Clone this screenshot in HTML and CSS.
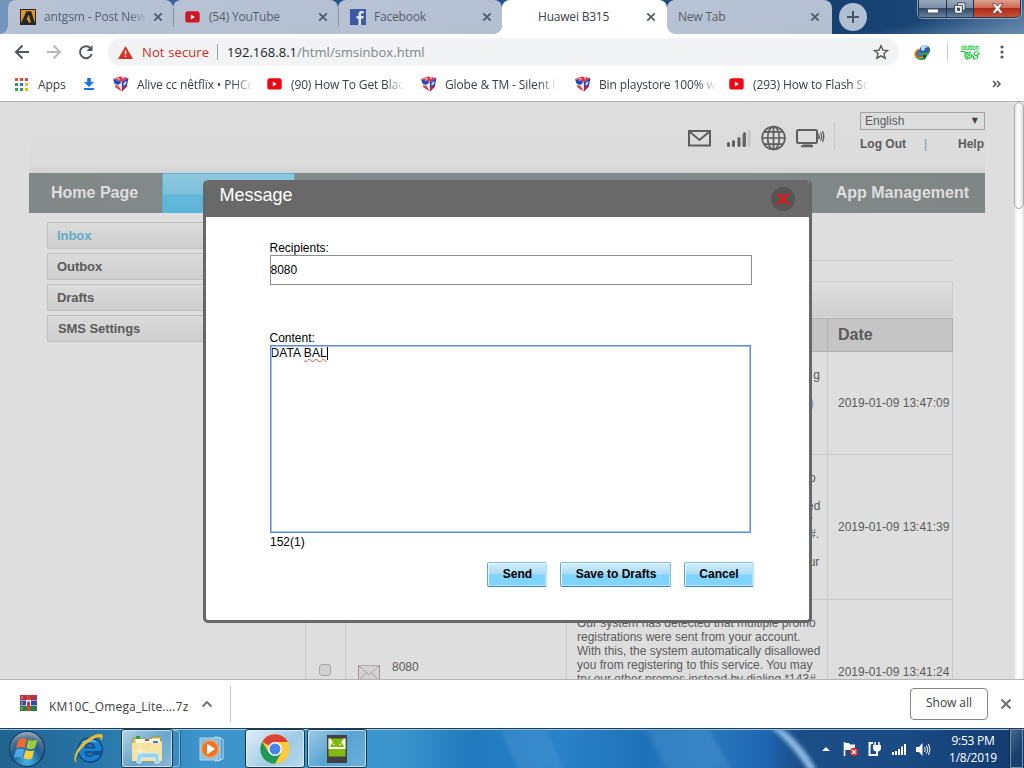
FILE: index.html
```html
<!DOCTYPE html>
<html lang="en">
<head>
<meta charset="utf-8">
<title>Huawei B315</title>
<link rel="stylesheet" href="styles.css">
</head>
<body>
<svg class="defs" width="0" height="0">
  <defs>
    <symbol id="x" viewBox="0 0 10 10"><path d="M1.3 1.3l7.4 7.4M8.7 1.3L1.3 8.7" stroke="currentColor" stroke-width="1.7" fill="none"/></symbol>
    <symbol id="yt" viewBox="0 0 15 12"><rect x=".3" y=".3" width="14.4" height="11.2" rx="2.6" fill="currentColor"/><path d="M5.8 3.6v4.8l4-2.4z" fill="#fff"/></symbol>
    <symbol id="cube" viewBox="0 0 16 16"><path d="M0 3L7 .5l8.500 1.500L9 6z" fill="#e23342"/><path d="M3 2.800l3-1 .8 2zM8.500 1.200l3 .5-1.500 1.600z" fill="#f7dfe4"/><path d="M0 3l9 3v9.500L2.500 11.500z" fill="#dfe6f4"/><path d="M0 3l8.800 3L5 9 1.500 7.500z" fill="#2746b4"/><path d="M2 9l3.500 1L8.800 15.500 2.500 11.500z" fill="#d94352"/><path d="M9 6l6.500-4-1.800 8.500L9 15.500z" fill="#1f3fc0"/><path d="M10.500 7l3-2-.5 3-2.500 2z" fill="#dfe4f8"/><path d="M9 11.500l5-2.500-.5 2L9 15.500z" fill="#cf2436"/></symbol>
  </defs>
</svg>

<header class="tabstrip">
  <div class="tab first">
    <svg width="16" height="16" viewBox="0 0 16 16"><path fill="#24272d" d="M0 0h16v16H0z"/><path fill="#e0962a" d="M1 1h14v13L11 2.500H6.500L1 14z"/><path fill="#24272d" d="M6.500 2.500H11L15 15h-4L8.600 6.500 7 10.500h1.500l1 2.500H6l-.8 2H1.500z"/><path fill="#e0962a" d="M8.600 5.500L11 13.500H8.500L7.800 11H6.500z"/></svg>
    <span class="tab-name fade t1">antgsm - Post New</span><svg class="close" width="10" height="10"><use href="#x"/></svg>
  </div>
  <div class="tab sep">
    <svg class="dimred" width="15" height="12"><use href="#yt"/></svg>
    <span class="tab-name">(54) YouTube</span><svg class="close" width="10" height="10"><use href="#x"/></svg>
  </div>
  <div class="tab sep fb">
    <svg width="16" height="16" viewBox="0 0 16 16"><path fill="#3c5ba0" d="M0 0h16v16H0z"/><path fill="#e1e8f5" d="M8.500 16V9.500h-2V7h2V5.200C8.500 3 9.800 2 11.700 2h2v2.300h-1.300c-1 0-1.300.4-1.300 1.300V7h2.500l-.3 2.500H11V16z"/></svg>
    <span class="tab-name">Facebook</span><svg class="close" width="10" height="10"><use href="#x"/></svg>
  </div>
  <div class="tab active">
    <span class="tab-name">Huawei B315</span><svg class="close" width="10" height="10"><use href="#x"/></svg>
  </div>
  <div class="tab newtab">
    <span class="tab-name">New Tab</span><svg class="close" width="10" height="10"><use href="#x"/></svg>
  </div>
  <div class="plus"><svg width="14" height="14" viewBox="0 0 14 14"><path d="M7 1v12M1 7h12" stroke="#465468" stroke-width="2"/></svg></div>
  <div class="winctl">
    <span class="min"><svg width="12" height="6" viewBox="0 0 12 6"><rect x=".5" y="1" width="11" height="4" fill="#fff" stroke="#4a5568"/></svg></span>
    <span class="max"><svg width="12" height="12" viewBox="0 0 12 12"><path d="M3.500.8h7.500v7.400H8.500V3.500h-5z" fill="#eef3f8" stroke="#3a4658"/><path fill-rule="evenodd" d="M.7 3.300h7.600v7.900H.7zM3.400 6v2.500h2.200V6z" fill="#fff" stroke="#3a4658"/></svg></span>
    <span class="cls"><svg width="13" height="11" viewBox="0 0 13 11"><path d="M1 .8h3.400l2.100 2.400L8.600.8H12L8.500 5.300l3.700 4.900H8.700L6.500 7.600l-2.200 2.600H.8l3.700-4.900z" fill="#fff" stroke="#5a3a3a" stroke-width=".8"/></svg></span>
  </div>
</header>

<div class="toolbar">
  <svg class="nav-ic" width="92" height="20" viewBox="0 0 92 20" fill="none" stroke-width="2"><path stroke="#54585d" d="M15 10H2.500M8.500 3.500L2 10l6.500 6.500"/><path stroke="#b7b9bc" d="M33 10h12.500M39.500 3.500L46 10l-6.500 6.500"/><path stroke="#54585d" d="M76.500 6.200A6 6 0 1 0 77.700 12"/><path fill="#54585d" d="M78.500 3v6h-6z"/></svg>
  <div class="omnibox">
    <svg width="15" height="13" viewBox="0 0 15 13"><path d="M7.500 0L15 13H0z" fill="#d93025"/><path d="M6.700 4.500h1.600v3.700H6.700zM6.700 9.500h1.600v1.600H6.700z" fill="#fff"/></svg>
    <span class="notsec">Not secure</span><i></i><span class="url"><b>192.168.8.1</b>/html/smsinbox.html</span>
    <svg class="star" width="16" height="16" viewBox="0 0 16 16"><path d="M8 1.800l1.900 4.300 4.600.4-3.500 3.100 1.100 4.600L8 11.800l-4.100 2.400L5 9.600 1.500 6.500l4.600-.4z" fill="none" stroke="#54585d" stroke-width="1.400"/></svg>
  </div>
  <svg class="idm" width="17" height="16" viewBox="0 0 17 16"><path d="M5 4C1 5.500-.5 9 .5 12c2 3 6 3 9 2L5 9z" fill="#d9c52e"/><path d="M6 5.500C2 6 1 9 1.500 11.500c2 2.500 5 2 8 1.500z" fill="#c8452e"/><path d="M6 6.500C3 7 2.500 9 3 10.500c2 2 4 1.500 7 1z" fill="#387cd0"/><path d="M1 12c3 2.500 6 3 9 1l2 1-3 2c-4 0-7-1-8-4z" fill="#2c9140"/><circle cx="10.800" cy="6.200" r="5.300" fill="#2a5cae"/><path d="M7 3c3-3 6-2 7 0l-3 1-1 3-3-1z" fill="#b9d8f3"/><path d="M5.500 7.500c3 2 7 2 10.800-.5l-5.800 9z" fill="#3aa03c"/><path d="M8.500 11l2 4 2.500-4z" fill="#154b22"/></svg>
  <i class="vsep"></i>
  <svg class="olu" width="20" height="18" viewBox="0 0 20 18"><text x="1" y="6.500" font-size="7.500" textLength="18" lengthAdjust="spacingAndGlyphs">olution</text><g fill="none" stroke="#12c734" stroke-width="1.100"><path d="M.5 8.500h4l1 2M7.500 9c-4 2-3 7 1 7.500M11 9c-6 1-5 6-1 6 3-.5 2-4 0-4s-2 2 0 2M18.500 9c-5-1-5.500 3-2.500 3.500s2 4-2 3.500M19.500 10l-3.500 3M12.500 12.500q2 1 1 4"/></g></svg>
  <svg class="dots" width="4" height="14" viewBox="0 0 4 14" fill="#54585d"><circle cx="2" cy="2" r="1.600"/><circle cx="2" cy="7" r="1.600"/><circle cx="2" cy="12" r="1.600"/></svg>
</div>

<nav class="bookmarks">
  <svg width="13" height="13" viewBox="0 0 13 13"><path fill="#e8453c" d="M0 0h3v3H0zM5 0h3v3H5zM10 0h3v3h-3z"/><path fill="#34a056" d="M0 5h3v3H0zM0 10h3v3H0z"/><path fill="#1a73e8" d="M5 5h3v3H5z"/><path fill="#34a056" d="M5 10h3v3H5z"/><path fill="#f7b314" d="M10 5h3v3h-3zM10 10h3v3h-3z"/></svg>
  <span class="apps">Apps</span>
  <svg class="dl" width="10" height="12" viewBox="0 0 10 12"><path d="M3.200 0h3.600v4H10L5 9 0 4h3.200zM0 10h10v2H0z" fill="#1a73e8"/></svg>
  <span class="bm"><svg width="16" height="16"><use href="#cube"/></svg><span class="fade">Alive cc nêtflïx • PHCc</span></span>
  <span class="bm"><svg class="red" width="15" height="12"><use href="#yt"/></svg><span class="fade">(90) How To Get Blac</span></span>
  <span class="bm"><svg width="16" height="16"><use href="#cube"/></svg><span class="fade">Globe &amp; TM - Silent l</span></span>
  <span class="bm"><svg width="16" height="16"><use href="#cube"/></svg><span class="fade">Bin playstore 100% w</span></span>
  <span class="bm"><svg class="red" width="15" height="12"><use href="#yt"/></svg><span class="fade">(293) How to Flash Sc</span></span>
  <svg class="more" width="9" height="8" viewBox="0 0 9 8"><path d="M1 1l3 3-3 3M5 1l3 3-3 3" fill="none" stroke="#4d5156" stroke-width="1.500"/></svg>
</nav>

<main class="viewport">
  <div class="page">
    <div class="head">
      <svg class="status" width="140" height="30" viewBox="0 0 140 30">
        <g fill="none" stroke="#5e5e5e" stroke-width="2"><path d="M2 8h21v14.500H2z"/><path d="M3 9l9.500 8L22 9" stroke-width="1.800"/></g>
        <g stroke-width="3" stroke-linecap="round"><path stroke="#5e5e5e" d="M41.500 20.500v2M46.500 18.500v4M52 15.500v7M57 12.500v10"/><path stroke="#666" d="M57.500 10.500v12"/><path stroke="#c6c6c6" d="M62 8v14.500"/></g>
        <g fill="none" stroke="#5e5e5e" stroke-width="1.700"><circle cx="86.500" cy="15" r="11.400"/><ellipse cx="86.500" cy="15" rx="5.800" ry="11.400"/><path d="M86.500 3.600v22.800M75 15h23M77 8.800h19M77 21.200h19"/></g>
        <g fill="none" stroke="#5e5e5e" stroke-width="2"><rect x="110" y="7" width="20" height="13" rx="1.500"/><path d="M116 22.500h9M114 23.200h12"/><path stroke-width="1.300" d="M131.500 11q1.500 2.500 0 5M133.500 9.500q2.300 4 0 8M135.500 8q2.500 5.500 0 11"/></g>
      </svg>
      <div class="acct">
        <div class="lang"><span>English</span><small>▼</small></div>
        <div class="links"><b>Log Out</b><em>|</em><b>Help</b></div>
      </div>
    </div>
    <div class="menu"><span class="home">Home Page</span><span class="cur"></span><span class="app">App Management</span></div>
    <div class="cols">
      <ul class="side"><li class="on">Inbox</li><li>Outbox</li><li>Drafts</li><li class="sms">SMS Settings</li></ul>
      <section class="list">
        <div class="rule"></div>
        <div class="tools"></div>
        <div class="row th"><div></div><div></div><div></div><div class="date">Date</div></div>
        <div class="row r1"><div></div><div></div><div class="msg end"><p>g<br><br><span class="pr">)</span><br><br>&nbsp;</p></div><div class="date">2019-01-09 13:47:09</div></div>
        <div class="row r2"><div></div><div></div><div class="msg"><p>Our system has detected that multiple promo<br>registrations were sent from your account.<br>With this, the system automatically disallowed<br>you from registering to this service. You may<br>try our other promos instead by dialing *143#.<br><br><span class="your">your</span><br>&nbsp;</p></div><div class="date">2019-01-09 13:41:39</div></div>
        <div class="row r2"><div class="cb"><i></i></div><div class="from"><svg width="22" height="16" viewBox="0 0 22 16"><rect x=".5" y=".5" width="21" height="15" fill="#d2d2d2" stroke="#aaa"/><path d="M.5 .5v15M21.500.5v15" stroke="#b77c7c" stroke-dasharray="2 2"/><path d="M.5 2.500v13M21.500 2.500v13" stroke="#7d8db0" stroke-dasharray="1 3"/><path d="M1 1l9.500 8.500h1L21 1M1 15l7.500-7M21 15l-7.500-7" fill="none" stroke="#a4a4a4"/></svg><span>8080</span></div><div class="msg"><p>Our system has detected that multiple promo<br>registrations were sent from your account.<br>With this, the system automatically disallowed<br>you from registering to this service. You may<br>try our other promos instead by dialing *143#.<br><br><br>&nbsp;</p></div><div class="date">2019-01-09 13:41:24</div></div>
      </section>
    </div>
  </div>
  <div class="scroll"><div class="thumb"></div></div>

  <div class="dialog">
    <div class="dlg-head"><span>Message</span><svg width="24" height="24" viewBox="0 0 24 24"><circle cx="12" cy="12" r="12" fill="#555"/><path d="M6.500 6.500l11 11M17.500 6.500l-11 11" stroke="#f90d0d" stroke-width="2.200"/></svg></div>
    <div class="dlg-body">
      <label>Recipients:</label>
      <div class="field">8080</div>
      <label class="lc">Content:</label>
      <div class="area">DATA <u>BAL</u><s></s></div>
      <div class="count">152(1)</div>
      <div class="btns"><span class="b1">Send</span><span class="b2">Save to Drafts</span><span class="b3">Cancel</span></div>
    </div>
  </div>
</main>

<div class="downloads">
  <svg width="17" height="16" viewBox="0 0 17 16"><path fill="#b52a4e" d="M0 0h17v5H0z"/><path fill="#3448a8" d="M0 5.500h17v5H0z"/><path fill="#23804a" d="M0 11h17v5H0z"/><path fill="#c0502a" d="M6.500 0h4v16h-4z"/><path fill="#eee" d="M6 5h5v6H6z"/><path fill="#a32c23" d="M7.200 6.500h2.600V11H7.200z"/><path stroke="#e0c244" d="M2 1v3M2 6.500v3M2 12v3"/></svg>
  <span class="fname">KM10C_Omega_Lite....7z</span>
  <svg class="chev" width="12" height="8" viewBox="0 0 12 8"><path d="M1.500 6.500L6 2l4.500 4.500" fill="none" stroke="#6b6f74" stroke-width="1.800"/></svg>
  <i></i>
  <span class="showall">Show all</span>
  <svg class="dx" width="12" height="12"><use href="#x"/></svg>
</div>

<footer class="taskbar">
  <svg class="rays" width="1024" height="40" viewBox="0 0 1024 40">
    <defs><filter id="soft" x="-20%" y="-20%" width="140%" height="140%"><feGaussianBlur stdDeviation="2"/></filter></defs>
    <path d="M500 0h46l18 40h-46zM646 0h62l24 40h-66z" fill="#5aa2dc" opacity=".3" filter="url(#soft)"/>
    <path d="M770 -2h9c15 10 28 25 38 44h-8C798 25 786 10 770-2z" fill="#8fbde4" filter="url(#soft)"/>
  </svg>
  <svg class="orb" width="38" height="38" viewBox="0 0 38 38">
    <defs><radialGradient id="og" cx=".5" cy=".85" r=".9"><stop offset="0" stop-color="#49b8e6"/><stop offset=".5" stop-color="#1b5c92"/><stop offset=".75" stop-color="#587891"/><stop offset="1" stop-color="#b7c6d2"/></radialGradient></defs>
    <circle cx="19" cy="19" r="17.500" fill="url(#og)" stroke="#173c5b" stroke-width="1.200"/>
    <path d="M10.500 9.500q4.500-2.500 8.500-.3l-2.300 8.800q-4.500-1.800-8.500.3z" fill="#ee6a33"/><path d="M20.300 9.800q4.200 2 9-.3L26.800 18.300q-4.500 2-8.700-.2z" fill="#9ccc3c"/><path d="M7.800 19.700q4.500-2.200 8.500-.2L14 27.500q-4-1.700-8 .3z" fill="#4ba8e8"/><path d="M17.700 20q4.200 2 8.600.2L24 28.500q-4.500 1.800-8.500-.5z" fill="#fbcb3a"/>
  </svg>
  <svg class="ie" width="34" height="34" viewBox="0 0 34 34"><path d="M18 6C10 6 6 12 6 18s4.500 12 12.500 12c5.500 0 9.500-3 11-8h-7.500c-.8 1.700-2 2.300-3.700 2.300-3 0-4.800-1.500-5-4.300h17C31 12 26 6 18 6zm-4.700 9.500c.5-2.300 2.100-3.800 4.700-3.800s4.200 1.500 4.700 3.800z" fill="#1b80d0" stroke="#0c4884" stroke-width="1.300"/><path d="M9 11c5-5 13-4 17 0-6-2-11-1-17 0z" fill="#8fd6f7" opacity=".7"/><path d="M4.500 31C-1 26 6 13 17 6c6-4 12-5 13.500-3 .8 1.300 0 3.500-1.500 6 .5-3-1-4.500-4-3.500C17 8 4 20 4 27c0 1.800.2 2.800.5 4z" fill="#f2bd2c"/></svg>
  <div class="tb exp"><svg width="34" height="30" viewBox="0 0 34 30"><path d="M3 4h8l1 2h9l1-3h8l1 4v20H3z" fill="#e8cf7d" stroke="#b48f3d"/><path d="M6 5h24v6H6z" fill="#fbf6dc"/><path d="M6 2h4v3H6z" fill="#29a043"/><path d="M15 5h4v2h-4z" fill="#d34b2c"/><path d="M23 7h5v2h-5z" fill="#3a7ed0"/><path d="M2 9h28l1-2h1v20H2z" fill="#f5e3a0"/><path d="M7 29v-7q0-3 3-3h16q3 0 3 3v7h-4v-5H11v5z" fill="#96d4ee" stroke="#d3eef9"/><path d="M10 10v12M5 17h11" stroke="#fff" opacity=".6"/></svg></div>
  <i class="stack"></i>
  <svg class="wmp" width="30" height="28" viewBox="0 0 30 28"><path d="M19 3l5 1v20l-5 1z" fill="#4b98cd" stroke="#b9dcf0"/><path d="M16 2l5 .5v23l-5 .5z" fill="#70b0da" stroke="#cbe6f5"/><path d="M1 3h17v22H1z" fill="#86bede" stroke="#add7ee"/><circle cx="11" cy="14" r="8.500" fill="#f17520" stroke="#fbb06e"/><path d="M8 8.500v11l8-5.500z" fill="#fff"/></svg>
  <div class="tb chrome"><svg width="30" height="30" viewBox="0 0 30 30"><circle cx="15" cy="15" r="14.700" fill="#fcca3d"/><path d="M15 15L2.200 7.700A14.700 14.700 0 0 1 27.900 8H15z" fill="#db4437"/><path d="M15 15l6.200 3.700L15 29.700A14.700 14.700 0 0 1 2.200 7.700L8.800 18.600z" fill="#20985a"/><circle cx="15" cy="15" r="7" fill="#fff"/><circle cx="15" cy="15" r="5.500" fill="#4683ef"/></svg></div>
  <div class="tb droid"><svg width="20" height="28" viewBox="0 0 20 28"><path d="M0 0h20v28H0z" fill="#404040"/><path d="M1.500 3.500h17v18h-17z" fill="#84b812"/><path d="M1.500 3.500h2l3 3.500h7l3-3.500h2V14h-17z" fill="#f3f8e8"/><path d="M4 4.500l1-.8L7.300 6.700h5.400L15 3.700l1 .8-2 3q2.500 1.500 3 4.500H3q.5-3 3-4.500z" fill="#84b812"/><path d="M6 9h1.500v1H6zM12.500 9H14v1h-1.500z" fill="#fff"/></svg></div>
  <svg class="tray" width="114" height="20" viewBox="0 0 114 20">
    <path d="M0 12l4-4 4 4z" fill="#fff"/>
    <path d="M22.500 3v14" stroke="#fff" stroke-width="1.600"/><path d="M23 4h4l1 1.500h5V11h-10z" fill="#f4f4f4"/><circle cx="32" cy="13" r="4.300" fill="#d92b25"/><path d="M30 11l4 4M34 11l-4 4" stroke="#fff" stroke-width="1.400"/>
    <path d="M51 4h-3.500v12h6.500M47 6h2" fill="none" stroke="#fff" stroke-width="2"/><path d="M53 3v4M57 3v4" stroke="#fff" stroke-width="1.500"/><path d="M51 6h8v3q0 3-3 3.500V17h-2v-4.500q-3-.5-3-3.500z" fill="#fff"/>
    <path d="M70 13h2v3h-2zM73 12h2v4h-2zM76 10h2v6h-2zM79 7.500h2V16h-2zM82 5h2v11h-2z" fill="#fff"/>
    <path d="M94 8h3l3.500-4v13L97 13h-3z" fill="#fff"/><path d="M102.500 8q1.500 2.500 0 5M104.500 6.500q2.500 4 0 8M106.500 5q3 5.500 0 11" fill="none" stroke="#fff" stroke-width="1"/>
  </svg>
  <div class="clock"><span>9:53 PM</span><span>1/8/2019</span></div>
  <i class="desk"></i>
</footer>
</body>
</html>
```
FILE: styles.css
```css
* { box-sizing: border-box; }
html, body { margin: 0; height: 768px; overflow: hidden; }
body { width: 1024px; display: flex; flex-direction: column; background: #fff; font: 12px "Open Sans", "Noto Sans", sans-serif; color: #3c4043; white-space: nowrap; }
svg { display: block; flex: none; overflow: visible; }
.defs { position: absolute; }
.fade { -webkit-mask-image: linear-gradient(90deg, #000 84%, transparent 100%); mask-image: linear-gradient(90deg, #000 84%, transparent 100%); }

/* tab strip */
.tabstrip { flex: none; height: 34px; display: flex; padding-left: 8px; position: relative; background: linear-gradient(170deg, transparent 55%, rgba(150,180,210,.5) 100%) 832px 0 / 192px 34px no-repeat, linear-gradient(90deg, #7396bf 0, #5c84b4 100px, #295790 200px, #245390 500px, #15406f 830px, #184474 910px, #40658f 1024px); }
.tab { flex: none; width: 165px; height: 34px; display: flex; align-items: center; padding: 0 11px 1px 12px; background: linear-gradient(165deg, #b8c2d4, #b2c0d2); color: #55606f; border-radius: 8px 8px 0 0; position: relative; letter-spacing: -.2px; }
.tab svg:first-child { margin-right: 8px; }
.tab .close { margin-left: auto; color: #4e5967; }
.tab.first { padding-right: 10px; }
.tab .t1 { width: 102px; letter-spacing: -.15px; }
.tab .dimred:first-child { margin-right: 9px; color: #cf1624; }
.sep:not(.fb) { padding-right: 10px; }
.first::before { content: ""; position: absolute; left: -8px; bottom: 0; width: 8px; height: 8px; background: radial-gradient(circle at 0 0, transparent 7.5px, #b5c1d3 8px); }
.sep::before { content: ""; position: absolute; left: 0; top: 8px; width: 1px; height: 19px; background: #8793a4; }
.tab.fb { border-radius: 8px 8px 8px 0; width: 164px; padding-right: 10px; }
.tab.active { background: #fff; color: #3c4043; padding-left: 36px; }
.active::before, .active::after { content: ""; position: absolute; bottom: 0; width: 8px; height: 8px; z-index: 1; }
.active::before { left: -8px; background: radial-gradient(circle at 0 0, transparent 7.500px, #fff 8px); }
.active::after { right: -8px; background: radial-gradient(circle at 100% 0, transparent 7.500px, #fff 8px); }
.tab.newtab { padding-left: 11px; padding-right: 12px; }
.plus { width: 28px; height: 28px; margin: 3px 0 0 7px; border-radius: 50%; background: #b0bfd1; display: grid; place-items: center; }
.winctl { position: absolute; left: 918px; top: 0; width: 103px; height: 18px; display: flex; border: 1px solid #26354d; border-top: 0; border-radius: 0 0 5px 5px; box-shadow: 0 0 0 1px rgba(205,218,232,.6); overflow: hidden; }
.winctl span { display: grid; place-items: center; background: linear-gradient(#9aaabd 0, #7b8ea6 45%, #32496a 50%, #67809d 100%); border-right: 1px solid #26354d; }
.winctl .min { width: 28px; padding-top: 4px; } .winctl .max { width: 27px; padding-bottom: 1px; }
.winctl .cls { flex: 1; border: 0; padding-bottom: 1px; background: linear-gradient(#e0a08f 0, #cc6a55 45%, #b12a15 50%, #c8503a 100%); }

/* toolbar */
.toolbar { flex: none; height: 36px; display: flex; align-items: center; padding-left: 14px; }
.omnibox { margin-left: 2px; width: 791px; height: 28px; border-radius: 14px; background: #f1f3f4; display: flex; align-items: center; padding: 0 10px; font-size: 13px; color: #80868b; }
.notsec { margin-left: 9px; color: #cf2e24; width: 67px; letter-spacing: .13px; }
.omnibox i { width: 1px; height: 16px; background: #9aa0a6; margin: 0 9px 0 8px; }
.url { letter-spacing: .03px; }
.url b { font-weight: 400; color: #202124; }
.star { margin-left: auto; }
.idm { margin-left: 15px; }
.vsep { width: 1px; height: 16px; background: #c6c9cd; margin: 0 12px 0 16px; }
.olu text { fill: #12c734; stroke: #12c734; stroke-width: .3px; font-family: "Open Sans", sans-serif; }
.dots { margin-left: 20px; }

/* bookmarks bar */
.bookmarks { flex: none; height: 32px; margin-bottom: -1px; padding: 0 0 4px 15px; display: flex; align-items: center; }
.bookmarks .apps { margin-left: 10px; width: 46px; letter-spacing: -.1px; }
.dl { margin-right: 19px; }
.bm { width: 154px; display: flex; align-items: center; letter-spacing: -.13px; }
.bm svg { margin-right: 8px; }
.bm .fade { min-width: 112px; }
.bm svg.red { color: #f00612; margin-left: 0; margin-right: 9px; }
.more { margin-left: 109px; }

/* page */
.viewport { flex: none; height: 579px; position: relative; overflow: hidden; display: flex; justify-content: space-between; background: #dedede; border-top: 1px solid #aeb3b0; border-bottom: 1px solid #b4b4b4; font-family: "Liberation Sans", Arial, sans-serif; color: #5b5b5b; }
.page { margin-left: 29px; width: 956px; flex: none; }
.head { height: 71px; display: flex; justify-content: flex-end; background: linear-gradient(#dedede, #dbdbdb 90%, #d2d2d2); }
.status { margin: 21px 8px 0 0; }
.acct { width: 150px; padding: 9.500px 0 0 25px; position: relative; }
.acct::before { content: ""; position: absolute; left: -1px; top: 20px; width: 1px; height: 28px; background: #c7c7c7; }
.lang { height: 18px; border: 1px solid #a3a3a3; display: flex; justify-content: space-between; align-items: center; padding: 0 6px 0 4px; width: 125px; }
.lang small { font: 8px "DejaVu Sans", sans-serif; color: #444; }
.links { display: flex; margin: 7.500px 1px 0 0; line-height: 14px; }
.links em { font-style: normal; color: #5b9cc0; margin: 0 auto 0 18px; }
.menu { height: 40px; display: flex; align-items: center; justify-content: space-between; background: linear-gradient(90deg, #828787, #858a8c 50%, #808585); color: #dedede; font: bold 16px "Liberation Sans", Arial, sans-serif; }
.menu .home { width: 133px; padding-left: 22px; }
.menu .cur { height: 40px; width: 133px; margin-right: auto; background: linear-gradient(#8dc9de, #7dc0da 50%, #62b8da 54%, #5cb5da); border: solid #5faecb; border-width: 1px 1px 0; }
.menu span { padding-bottom: 1px; } .menu .app { padding-right: 16px; }
.cols { display: flex; padding-left: 18px; }
.side { list-style: none; margin: 9px 0 0; padding: 0; width: 230px; display: flex; flex-direction: column; gap: 4px; }
.side li { height: 27px; padding-left: 9px; border: 1px solid #c0c0c0; border-radius: 1px; background: linear-gradient(#dbdbdb, #cecece); font: bold 13px/25px "Liberation Sans", Arial, sans-serif; color: #5b5b5b; letter-spacing: -.07px; }
.side .on { color: #63abc9; } .side .sms { padding-left: 10px; }
.list { margin-left: 28px; width: 648px; padding-top: 47px; }
.rule { height: 1px; background: #c9c9c9; margin-bottom: 20px; }
.tools { height: 36px; border: 1px solid #cbcbcb; background: linear-gradient(#dedede, #d0d0d0); margin-bottom: 1px; }
.row { display: grid; grid-template-columns: 41px 221px 261px 125px; }
.row > div { border-right: 1px solid #c8c8c8; border-bottom: 1px solid #c8c8c8; display: flex; align-items: center; }
.row > div:first-child { border-left: 1px solid #c8c8c8; }
.row .date { padding-left: 10px; }
.th { height: 34px; background: #c5c5c5; border-top: 1px solid #b0b0b0; font: bold 16px "Liberation Sans", Arial, sans-serif; }
.row.th > div { border-color: #b0b0b0; }
.r1 { height: 103px; } .r2 { height: 145px; }
.msg p { margin: 0 0 0 10px; line-height: 14px; }
.msg.end { justify-content: flex-end; padding-right: 7px; }
.msg.end p { text-align: right; } .pr { margin-right: 6px; color: #7aa0c8; }
.your { margin-left: 219px; }
.row .cb { justify-content: center; }
.cb i { width: 12px; height: 12px; border: 1px solid #a7a7a7; border-radius: 3px; background: #d0d0d0; margin: -4px 2px 0 0; }
.from svg { margin: 1px 12px 0 12px; } .from span { margin-top: -10px; }

.scroll { width: 10px; background: linear-gradient(90deg, #e4e4e4, #fff 35%, #fdfdfd 75%, #dcdcdc); }
.thumb { height: 107px; border: 1px solid #adadad; border-radius: 5px; background: linear-gradient(90deg, #e6e6e6, #fff 45%, #ddd); }

/* message dialog */
.dialog { position: absolute; left: 203px; top: 78px; width: 609px; height: 443px; border: solid #676767; border-width: 0 3px 3px; border-radius: 5px; background: #fff; overflow: hidden; color: #000; }
.dlg-head { height: 37px; background: #696969; color: #fff; font-size: 18px; display: flex; justify-content: space-between; padding: 5px 14px 0 13.5px; line-height: 21px; }
.dlg-head svg { margin-top: 2px; }
.dlg-body { padding: 24px 0 0 63.500px; line-height: 14px; }
.dlg-body label { display: block; }
.field { width: 482px; height: 30px; border: 1px solid #8e8e8e; line-height: 28px; }
.dlg-body .lc { margin-top: 46px; }
.area { width: 481px; height: 188px; border: 1px solid #5e8bdc; outline: 1px solid #a6c1ef; outline-offset: -2px; display: flex; white-space: pre; letter-spacing: .08px; }
.area u { text-decoration: underline wavy #e05050 1px; text-underline-offset: 1px; }
.area s { width: 1px; height: 14px; background: #000; }
.count { margin: 2px 0 0 .5px; }
.btns { display: flex; gap: 13px; margin: 13px 0 0 217.500px; }
.btns span { height: 25px; border: 1px solid #8cbfdd; border-bottom-color: #3f86b4; border-left-color: #6aa5c9; border-radius: 2px; box-shadow: inset 1px 1px #e4f6ff, inset -1px -1px #b5e5fb; background: linear-gradient(#d5effc 0, #a9dbf6 48%, #80d4fb 52%, #80d4fb 100%); font-weight: 700; line-height: 22px; text-align: center; }
.btns .b1, .btns .b3 { border-right-color: #b5e5fb; }
.b1 { width: 60px; padding-left: 1px; } .b2 { width: 111px; padding-left: 1px; } .b3 { width: 70px; }

/* downloads shelf */
.downloads { flex: none; height: 48px; display: flex; align-items: center; padding-left: 20px; }
.downloads > svg:first-child { margin-top: -3px; }
.fname { margin: 4px 0 0 12px; width: 141px; letter-spacing: .17px; }
.chev { margin-left: 11px; }
.downloads i { width: 1px; height: 36px; background: #c5c5c5; margin-left: 17px; }
.showall { margin-left: 679px; margin-top: -1px; width: 78px; height: 32px; border: 1px solid #868686; border-radius: 4px; text-align: center; line-height: 28px; color: #3c4043; letter-spacing: -.05px; }
.dx { margin-left: 12px; color: #6b6f74; }

/* taskbar */
.taskbar { flex: none; height: 40px; display: flex; align-items: center; position: relative; overflow: hidden; border-top: 1px solid #1f3c52; box-shadow: inset 0 1px #9ec9e4; background: linear-gradient(90deg, #206390 0, #2774a6 90px, #3d94cb 200px, #3b95cc 400px, #207abd 470px, #2a82c8 560px, #1f72b8 640px, #2a78bd 710px, #1e66b2 765px, #1b4d86 800px, #1a4b85 900px, #123a6d 1024px); }
.taskbar > * { position: relative; flex: none; }
.taskbar > .rays { position: absolute; left: 0; top: 0; }
.orb { margin-left: 8px; }
.ie { margin-left: 26px; }
.tb { height: 39px; border: 1px solid #16384f; border-radius: 3px; box-shadow: inset 0 0 0 1px rgba(225,242,252,.75); background: linear-gradient(135deg, rgba(255,255,255,.65), rgba(255,255,255,.25) 55%, rgba(255,255,255,.4)); display: grid; place-items: center; }
.exp { width: 52px; margin-left: 15px; }
.stack { width: 7px; height: 37px; border: solid rgba(190,222,240,.65); border-width: 1px 1px 1px 0; border-radius: 0 3px 3px 0; box-shadow: 1px 0 #1e5f8c; }
.wmp { margin-left: 19px; }
.chrome { width: 60px; margin-left: 16px; background: linear-gradient(135deg, rgba(255,255,255,.85), rgba(255,255,255,.5) 60%, rgba(255,255,255,.65)); }
.droid { width: 60px; margin-left: 2px; background: linear-gradient(135deg, rgba(255,255,255,.5), rgba(255,255,255,.15) 50%, rgba(255,255,255,.25)); }
.tray { margin-left: 455px; }
.clock { width: 72px; margin-left: 1px; color: #fff; display: flex; flex-direction: column; align-items: center; line-height: 17px; letter-spacing: -.25px; }
.desk { position: absolute !important; right: 1px; top: 0; width: 13px; height: 39px; border: 1px solid #6f8fae; background: linear-gradient(120deg, #47688f, #1b3f6c 60%); box-shadow: -1px 0 #0f2a4c; }
```
